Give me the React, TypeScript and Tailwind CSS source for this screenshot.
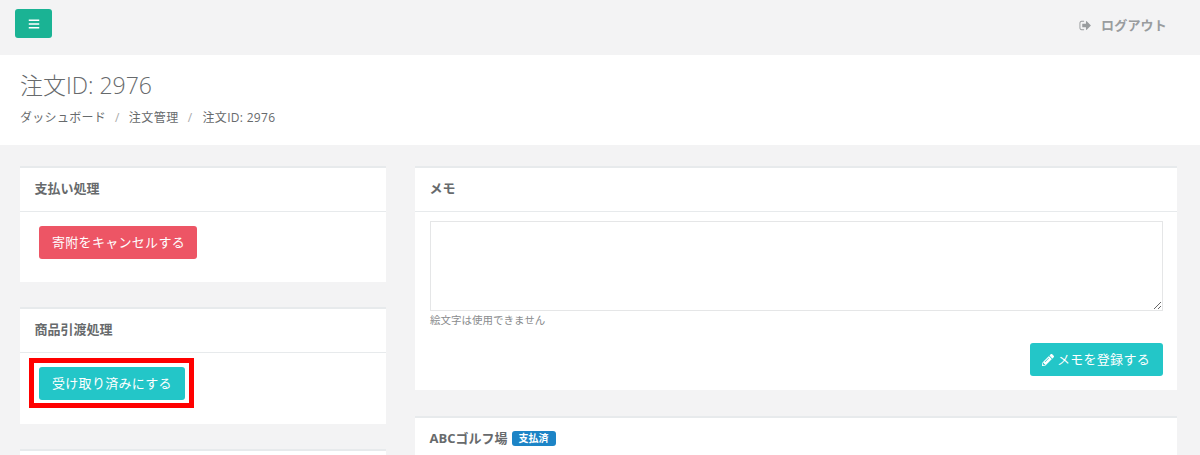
import type { ReactNode } from 'react';
import { FaBars, FaPencilAlt } from 'react-icons/fa';

function SignOutIcon() {
  return (
    <svg viewBox="0 0 1792 1792" className="w-[13px] h-[13px] fill-current">
      <path d="M704 1440q0 4 1 20t.5 26.5-3 23.5-10 19.5-20.5 6.5h-320q-119 0-203.5-84.5t-84.5-203.5v-704q0-119 84.5-203.5t203.5-84.5h320q13 0 22.5 9.5t9.5 22.5q0 4 1 20t.5 26.5-3 23.5-10 19.5-20.5 6.5h-320q-66 0-113 47t-47 113v704q0 66 47 113t113 47h312l11.5 1 11.5 3 8 5.5 7 9 2 13.5zm928-544q0 26-19 45l-544 544q-19 19-45 19t-45-19-19-45v-288h-448q-26 0-45-19t-19-45v-384q0-26 19-45t45-19h448v-288q0-26 19-45t45-19 45 19l544 544q19 19 19 45z" />
    </svg>
  );
}

function Panel({ title, className, children }: { title: ReactNode; className: string; children?: ReactNode }) {
  return (
    <section className={`bg-white border-t-[2px] border-[#e7eaec] ${className}`}>
      <div className="h-[44px] pl-[14.5px] pr-[15px] pb-[2px] flex items-center gap-[4px] border-b border-[#e7eaec] text-[13px] font-bold text-[#676a6c]">
        {title}
      </div>
      {children}
    </section>
  );
}

export default function App() {
  return (
    <div className="w-[1200px] h-[455px] overflow-hidden bg-[#f3f3f4] text-[#676a6c] font-['Open_Sans','Noto_Sans_CJK_JP',sans-serif]">
      {/* Top bar */}
      <nav className="h-[55px] pl-[15px] pr-[33px] pt-[9px] flex justify-between items-start">
        <button className="w-[37px] h-[29px] bg-[#1ab394] rounded-[3px] text-white flex items-center justify-center">
          <FaBars className="w-[12px] h-[12px]" />
        </button>
        <div className="h-[33px] flex items-center text-[13px] font-bold text-[#999c9e] tracking-[0.2px]">
          <SignOutIcon />
          <span className="ml-[9px]">ログアウト</span>
        </div>
      </nav>

      {/* Page heading */}
      <header className="h-[90px] bg-white pl-[20px] pt-[16px]">
        <h2 className="text-[23px] leading-[29px] font-light">注文ID: 2976</h2>
        <div className="mt-[9px] flex text-[12px] leading-[18px] tracking-[0.3px]">
          <span>ダッシュボード</span>
          <span className="px-[9px] text-[#aaa]">/</span>
          <span className="tracking-[0.5px]">注文管理</span>
          <span className="px-[9px] text-[#aaa]">/</span>
          <span className="ml-[1px]">注文ID: 2976</span>
        </div>
      </header>

      <main className="pt-[21px] pl-[20px] flex gap-[29px] items-start">
        {/* Left column */}
        <div className="w-[366px] flex flex-col gap-[25px]">
          <Panel title="支払い処理" className="h-[116px]">
            <div className="pl-[19px] pt-[14px]">
              <button className="h-[33px] pl-[13px] pr-[12px] rounded-[3px] bg-[#ed5565] text-white text-[13px] tracking-[0.3px]">
                寄附をキャンセルする
              </button>
            </div>
          </Panel>
          <Panel title="商品引渡処理" className="h-[117px]">
            <div className="pl-[19px] pt-[14px]">
              <div className="relative w-fit">
                <button className="h-[33px] px-[13px] rounded-[3px] bg-[#23c6c8] text-white text-[13px] tracking-[0.3px] block">
                  受け取り済みにする
                </button>
                <div className="absolute -left-[10px] -right-[9px] -top-[9px] -bottom-[8px] border-[5px] border-[#f00]" />
              </div>
            </div>
          </Panel>
          <Panel title="" className="h-[40px]" />
        </div>

        {/* Right column */}
        <div className="w-[762px] flex flex-col gap-[26px]">
          <Panel title="メモ" className="h-[224px]">
            <div className="pl-[15px] pr-[14px] pt-[9px]">
              <textarea className="block w-full h-[90px] border border-[#e5e6e7] bg-white outline-none" />
              <p className="mt-[2px] text-[10.5px] leading-[14px] text-[#8a8c8e]">絵文字は使用できません</p>
              <div className="mt-[16px] flex justify-end">
                <button className="h-[33px] pl-[12px] pr-[13px] rounded-[3px] bg-[#23c6c8] text-white text-[13px] tracking-[0.3px] flex items-center gap-[3px]">
                  <FaPencilAlt className="w-[12px] h-[12px]" />
                  メモを登録する
                </button>
              </div>
            </div>
          </Panel>
          <Panel
            title={
              <>
                ABCゴルフ場
                <span className="h-[15px] px-[7px] rounded-[3px] bg-[#1c84c6] text-white text-[10px] leading-[15px]">支払済</span>
              </>
            }
            className="h-[60px]"
          />
        </div>
      </main>
    </div>
  );
}
